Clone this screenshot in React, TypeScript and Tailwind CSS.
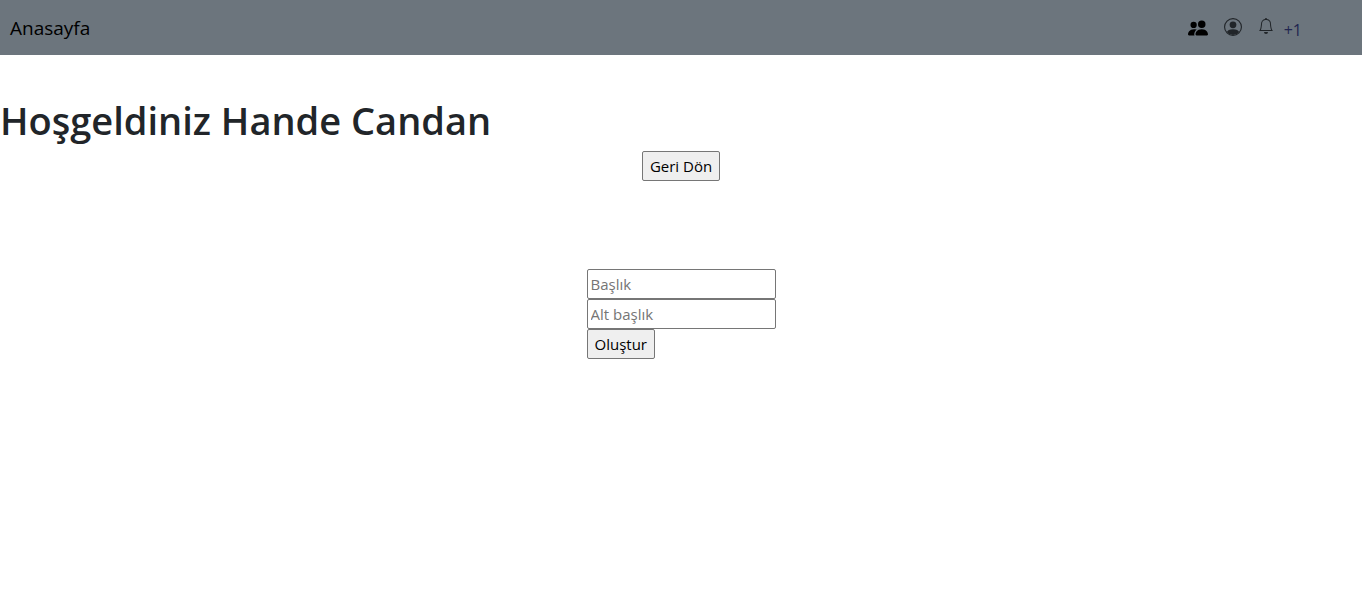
import React from "react";

function PeopleIcon() {
  return (
    <svg width="20" height="20" viewBox="0 0 16 16" fill="currentColor" aria-hidden="true">
      <path d="M7 14s-1 0-1-1 1-4 5-4 5 3 5 4-1 1-1 1H7zm4-6a3 3 0 1 0 0-6 3 3 0 0 0 0 6z" />
      <path
        fillRule="evenodd"
        d="M5.216 14A2.238 2.238 0 0 1 5 13c0-1.355.68-2.75 1.936-3.72A6.325 6.325 0 0 0 5 9c-4 0-5 3-5 4s1 1 1 1h4.216z"
      />
      <path d="M4.5 8a2.5 2.5 0 1 0 0-5 2.5 2.5 0 0 0 0 5z" />
    </svg>
  );
}

function PersonIcon() {
  return (
    <svg width="18" height="18" viewBox="0 0 16 16" fill="currentColor" aria-hidden="true">
      <path d="M13.468 12.37C12.758 11.226 11.195 10 8 10s-4.757 1.225-5.468 2.37A6.987 6.987 0 0 0 8 15a6.987 6.987 0 0 0 5.468-2.63z" />
      <path d="M8 9a3 3 0 1 0 0-6 3 3 0 0 0 0 6z" />
      <path
        fillRule="evenodd"
        d="M8 1a7 7 0 1 0 0 14A7 7 0 0 0 8 1zM0 8a8 8 0 1 1 16 0A8 8 0 0 1 0 8z"
      />
    </svg>
  );
}

function BellIcon() {
  return (
    <svg width="16" height="16" viewBox="0 0 16 16" fill="currentColor" aria-hidden="true">
      <path d="M8 16a2 2 0 0 0 2-2H6a2 2 0 0 0 2 2z" />
      <path
        fillRule="evenodd"
        d="M8 1.918l-.797.161A4.002 4.002 0 0 0 4 6c0 .628-.134 2.197-.459 3.742-.16.767-.376 1.566-.663 2.258h10.244c-.287-.692-.502-1.49-.663-2.258C12.134 8.197 12 6.628 12 6a4.002 4.002 0 0 0-3.203-3.92L8 1.917zM14.22 12c.223.447.481.801.78 1H1c.299-.199.557-.553.78-1C2.68 10.2 3 6.88 3 6c0-2.42 1.72-4.44 4.005-4.901a1 1 0 1 1 1.99 0A5.002 5.002 0 0 1 13 6c0 .88.32 4.2 1.22 6z"
      />
    </svg>
  );
}

export default function App() {
  return (
    <div className="min-h-screen bg-white font-['Open_Sans','Noto_Sans',sans-serif] text-[#212529]">
      <nav className="flex items-center justify-between bg-[#6c757d] pt-[13px] pr-[60px] pb-3 pl-[10px]">
        <a href="#" className="text-[19px] leading-[30px] text-black">
          Anasayfa
        </a>
        <div className="flex items-start gap-4 pt-1">
          <a href="#" aria-label="Kullanıcılar" className="text-black">
            <PeopleIcon />
          </a>
          <a href="#" aria-label="Profil">
            <PersonIcon />
          </a>
          <a href="#" aria-label="Bildirimler" className="flex gap-[10px]">
            <BellIcon />
            <span className="text-base leading-6 text-[#212550]">+1</span>
          </a>
        </div>
      </nav>

      <main>
        <h1 className="mt-[42px] mb-2 text-[38px] leading-[46px] font-semibold">
          Hoşgeldiniz Hande Candan
        </h1>
        <div className="flex justify-center">
          <button
            type="button"
            className="h-[30px] rounded-[2px] border border-[#767676] bg-[#efefef] px-[7px] text-[15px] leading-6 text-black"
          >
            Geri Dön
          </button>
        </div>
        <form
          className="mx-auto mt-[88px] flex w-[189px] flex-col items-start"
          onSubmit={(e) => e.preventDefault()}
        >
          <input
            type="text"
            aria-label="Başlık"
            placeholder="Başlık"
            className="h-[30px] w-full rounded-[2px] border border-[#767676] bg-white px-[3px] text-[15px] leading-6 text-black placeholder:text-[#757575]"
          />
          <input
            type="text"
            aria-label="Alt başlık"
            placeholder="Alt başlık"
            className="h-[30px] w-full rounded-[2px] border border-[#767676] bg-white px-[3px] text-[15px] leading-6 text-black placeholder:text-[#757575]"
          />
          <button
            type="submit"
            className="h-[30px] rounded-[2px] border border-[#767676] bg-[#efefef] px-[7px] text-[15px] leading-6 text-black"
          >
            Oluştur
          </button>
        </form>
      </main>
    </div>
  );
}
